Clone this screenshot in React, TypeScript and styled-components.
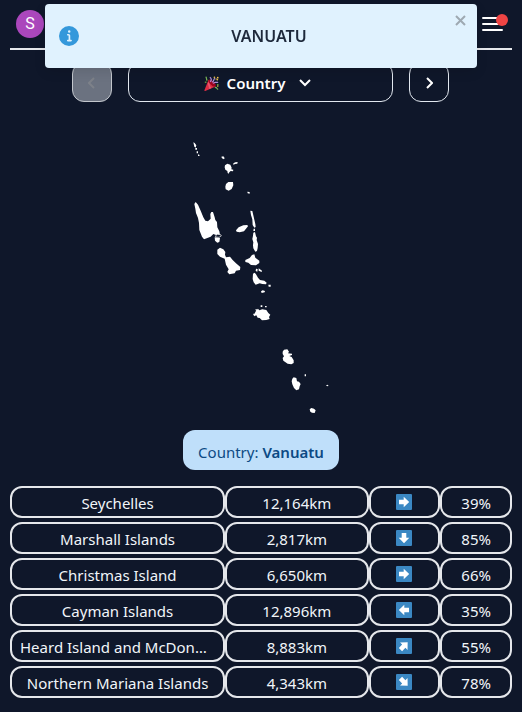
import React from "react";
import styled, { createGlobalStyle } from "styled-components";

const GlobalStyle = createGlobalStyle`
  *, *::before, *::after { box-sizing: border-box; }
  body {
    margin: 0;
    background: #0f172a;
    color: #f1f5f9;
    font-family: "Noto Sans", "Open Sans", sans-serif;
    font-size: 15px;
    line-height: 24px;
  }
  button { font: inherit; color: inherit; cursor: pointer; }
`;

const Page = styled.div`
  display: flex;
  flex-direction: column;
  padding: 0 10px 12px;
`;

const Header = styled.header`
  display: flex;
  align-items: center;
  justify-content: space-between;
  height: 50px;
  padding: 0 6px;
  border-bottom: 2px solid #e5e7eb;
`;

const Avatar = styled.button`
  width: 28px;
  height: 28px;
  padding: 0;
  border: 0;
  border-radius: 50%;
  background: #ab47bc;
  color: #fff;
  font-family: Roboto, sans-serif;
  font-size: 16px;
  line-height: 28px;
`;

const MenuButton = styled.button`
  position: relative;
  display: flex;
  padding: 0 3px;
  border: 0;
  background: none;
  color: #fff;
`;

const Badge = styled.span`
  position: absolute;
  top: -2px;
  right: -2px;
  width: 12px;
  height: 12px;
  border-radius: 50%;
  background: #ef4444;
`;

const Toast = styled.div`
  position: fixed;
  top: 4px;
  left: 45px;
  right: 45px;
  z-index: 10;
  display: flex;
  align-items: center;
  height: 64px;
  padding: 0 14px;
  border-radius: 4px;
  background: #e0f2fe;
  color: #1e293b;
  box-shadow: 0 4px 12px rgba(0, 0, 0, 0.1);
`;

const ToastText = styled.strong`
  flex: 1;
  padding-right: 4px;
  font-size: 16px;
  font-weight: 600;
  text-align: center;
`;

const CloseButton = styled.button`
  position: absolute;
  top: 11px;
  right: 10px;
  display: flex;
  padding: 0;
  border: 0;
  background: none;
  color: #9ea9b2;
`;

const Nav = styled.nav`
  display: flex;
  gap: 16px;
  margin: 12px 63px 0 62px;
`;

const NavButton = styled.button<{ $grow?: boolean }>`
  display: flex;
  flex: ${(p) => (p.$grow ? "1" : "0 0 40px")};
  align-items: center;
  justify-content: center;
  gap: 8px;
  height: 40px;
  padding: 2px 0 0;
  border: 1px solid #e2e8f0;
  border-radius: 12px;
  background: none;
  color: #fff;
  font-weight: 600;

  &:disabled {
    border-color: #c3c7cd;
    background: #6b7280;
    color: #7d8189;
    cursor: default;
  }
`;

const Chevron = styled.svg`
  display: block;
  fill: none;
  stroke: currentColor;
  stroke-width: 2;
`;

const RoundPanel = styled.section`
  display: flex;
  flex-direction: column;
`;

const Silhouette = styled.svg`
  display: block;
  align-self: center;
  margin-top: 36px;
  fill: #fff;
`;

const Answer = styled.p`
  align-self: center;
  margin: 12px 0 16px;
  padding: 10px 15px 6px;
  border-radius: 12px;
  background: #bfdffa;
  color: #0c4a84;

  strong { font-weight: 600; }
`;

const Guesses = styled.table`
  display: block;
`;

const GuessBody = styled.tbody`
  display: grid;
  gap: 4px;
`;

const GuessRow = styled.tr`
  display: grid;
  grid-template-columns: 3fr 2fr 1fr 1fr;
`;

const Cell = styled.td`
  display: block;
  min-width: 0;
  height: 32px;
  padding: 3px 8px 0;
  border: 2px solid #e5e7eb;
  border-radius: 12px;
  overflow: hidden;
  text-align: center;
  text-overflow: ellipsis;
  white-space: nowrap;
`;

const ArrowCell = styled(Cell)`
  display: flex;
  align-items: center;
  justify-content: center;
  padding: 0;
`;

type Guess = { name: string; distance: string; angle: number; direction: string; proximity: string };

const guesses: Guess[] = [
  { name: "Seychelles", distance: "12,164km", angle: 0, direction: "East", proximity: "39%" },
  { name: "Marshall Islands", distance: "2,817km", angle: 90, direction: "South", proximity: "85%" },
  { name: "Christmas Island", distance: "6,650km", angle: 0, direction: "East", proximity: "66%" },
  { name: "Cayman Islands", distance: "12,896km", angle: 180, direction: "West", proximity: "35%" },
  { name: "Heard Island and McDonald Islands", distance: "8,883km", angle: -45, direction: "North-east", proximity: "55%" },
  { name: "Northern Mariana Islands", distance: "4,343km", angle: 45, direction: "South-east", proximity: "78%" },
];

const Arrow = ({ angle, label }: { angle: number; label: string }) => (
  <svg width="16" height="16" viewBox="0 0 16 16" role="img" aria-label={label}>
    <rect width="16" height="16" rx="1" fill="#3b88c3" />
    <path d="M3 5.700h4.700V2.700L13.200 8l-5.500 5.300v-3H3z" fill="#fff" transform={`rotate(${angle} 8 8)`} />
  </svg>
);

const InfoIcon = () => (
  <svg width="20" height="20" viewBox="0 0 24 24" fill="#3498db" aria-hidden="true">
    <path d="M12 0a12 12 0 1 0 12 12A12.013 12.013 0 0 0 12 0zm.25 5a1.5 1.5 0 1 1-1.5 1.5 1.5 1.5 0 0 1 1.5-1.5zm2.25 13.500h-4a1 1 0 0 1 0-2h.75a.25.25 0 0 0 .25-.25v-4.500a.25.25 0 0 0-.25-.25h-.75a1 1 0 0 1 0-2h1a2 2 0 0 1 2 2v4.750a.25.25 0 0 0 .25.25h.75a1 1 0 1 1 0 2z" />
  </svg>
);

const PartyIcon = () => (
  <svg width="15" height="15" viewBox="0 0 36 36" aria-hidden="true">
    <path d="M11 9 1 34c-.5 1.500.5 2.500 2 2l25-11z" fill="#dd2e44" />
    <path d="m12 13 3 12 3 4-5 2-4-13z" fill="#ea596e" />
    <ellipse cx="19.500" cy="17" rx="5" ry="11" fill="#a0041e" transform="rotate(-45 19.500 17)" />
    <path d="M15 14C19 9 18 6 14 3M22 18c4-6 5-1 12-3" fill="none" stroke="#aa8dd8" strokeWidth="3" />
    <path d="M4 2c4 3 0 6 4 9M26 28c5-3 4 4 8 4" fill="none" stroke="#77b255" strokeWidth="3" />
    <path d="M19 15c6-2 3-6 7-10" fill="none" stroke="#aa8dd8" strokeWidth="3" />
    <g fill="#ffcc4d">
      <circle cx="25" cy="3" r="2" />
      <circle cx="33" cy="4" r="2" />
      <circle cx="32" cy="9" r="2" />
      <circle cx="29" cy="7" r="1.500" />
      <circle cx="33" cy="24" r="2" />
    </g>
    <path d="M2 13h4v4H2zM31 19h4v3h-4z" fill="#5c913b" />
  </svg>
);

const Vanuatu = () => (
  <Silhouette width="150" height="280" viewBox="186 138 150 280" role="img" aria-label="Map outline">
    <g transform="translate(185 135) scale(.3333)">
      <path d="m25 22 4 2 5 7-2 7-4-3zM31 39h5v5h-5zM35 49h4v6h-4zM39 58l5 2-1 3h-4zM109 65l6-1 4 5-2 4-6-3zM145 85l6-3 7-1-1 5-8 1-3 4zM120 91l7-5 9 3 4 9-1 5 6 1-1 5-7-1-4 4-2 4-3-2-1-6-6-4-2-7zM123 147l7-6h14l1 10-5 11-9 5-9-4-1-8zM187 170l7 1v5l-6-1z" />
    </g>
    <g transform="translate(190 198) scale(.3333)">
      <path d="M17 12 24 20 32 38 40 58 46 68 54 70 62 62 61 48 64 42 69 42 74 58 76 66 81 72 82 88 88 100 90 110 80 112 70 108 62 116 42 124 36 116 28 96 27 75 24 60 18 45 16 32 13 18z" />
      <path d="M74 118 90 120 88 132 82 134 75 128z" />
      <path d="M77 113 82 109 92 110 94 114 87 118 77 117z" fill="#0f172a" stroke="#fff" strokeWidth="2" />
      <path d="M82 155 90 149 100 154 106 162 105 170 108 178 120 176 128 186 138 196 151 207 150 216 138 218 134 226 118 229 112 222 116 214 108 200 104 182 90 176 82 168z" />
    </g>
    <g transform="translate(185 195) scale(.3333)">
      <path d="m153 106 8-9 14-6 12-1 2 4-6 7-6 8-13 3-9-2zM196 47l6 1 4 17 5 22 1 9-4 2-5-8-1-17-4-13zM206 101h4v7h-5zM205 113l5-2 3 13 3 4-1 7 4 12-1 12-2 9-5 2-6-10-1-9 1-9-3-10 2-10zM181 195l13-6 7-9 7-2 3 10 12 9v7l-10 7-15-1-8-7-9-2zM213 221l5 1-1 8-5-2zM221 220l10 7-1 4-9-4z" />
    </g>
    <g transform="translate(240 250) scale(.3333)">
      <path d="m39 71 5-3 4 5 6 10 6 7 13 2 7 6-2 5-11-1-8-2-12 4-6-7-3-10zM85 104h7v6h-6zM63 124l5-3 7 2-1 4-9 2zM62 166h5v5h-5zM75 168h5v4h-5zM49 181l5-5 4 5 9-3 12 2 6 9 6 5-4 7 2 6-10 3-13 1-7-7-6-1-4-7-7 3 1-7zM46 178l5-1-3 5zM40 191h4v5h-4z" />
    </g>
    <g transform="translate(270 340) scale(.3333)">
      <path d="m38 35 4-6 10-1 5 7-3 5 12 1v4l-8 3 7 3 6 10v8l-7 4-11-2-13-9-2-8 4-5-4-7zM67 116l4-4 8 2 2 10 6 1 5 7-3 7-2 9-8 3-7-7-5-11-2-9zM104 103h4v6h-4zM168 136l4-2 4 3-4 2zM119 208l5-4 8 2 5 5-3 8-8-1-5-3z" />
    </g>
  </Silhouette>
);

export default function App() {
  return (
    <>
      <GlobalStyle />
      <Toast role="alert">
        <InfoIcon />
        <ToastText>VANUATU</ToastText>
        <CloseButton aria-label="Close">
          <svg width="12" height="11" viewBox="0 0 12 11" fill="none" stroke="currentColor" strokeWidth="2">
            <path d="m1 1 9 9M10 1 1 10" />
          </svg>
        </CloseButton>
      </Toast>
      <Page>
        <Header>
          <Avatar aria-label="Account">S</Avatar>
          <MenuButton aria-label="Menu">
            <svg width="22" height="16" viewBox="0 0 22 16" stroke="currentColor" strokeWidth="2" strokeLinecap="round">
              <path d="M2 2h19M2 8h19M2 14h19" />
            </svg>
            <Badge />
          </MenuButton>
        </Header>
        <main>
          <Nav aria-label="Game rounds">
            <NavButton disabled aria-label="Previous">
              <Chevron width="8" height="12" viewBox="0 0 8 12">
                <path d="M6 1 1 6l5 5" />
              </Chevron>
            </NavButton>
            <NavButton $grow>
              <PartyIcon />
              <span>Country</span>
              <Chevron width="24" height="12" viewBox="0 0 24 12">
                <path d="m7 3 5 5 5-5" />
              </Chevron>
            </NavButton>
            <NavButton aria-label="Next">
              <Chevron width="8" height="12" viewBox="0 0 8 12">
                <path d="m2 1 5 5-5 5" />
              </Chevron>
            </NavButton>
          </Nav>
          <RoundPanel>
            <Vanuatu />
            <Answer>
              Country: <strong>Vanuatu</strong>
            </Answer>
          </RoundPanel>
          <Guesses aria-label="Guesses">
            <GuessBody>
              {guesses.map((g) => (
                <GuessRow key={g.name}>
                  <Cell>{g.name}</Cell>
                  <Cell>{g.distance}</Cell>
                  <ArrowCell>
                    <Arrow angle={g.angle} label={g.direction} />
                  </ArrowCell>
                  <Cell>{g.proximity}</Cell>
                </GuessRow>
              ))}
            </GuessBody>
          </Guesses>
        </main>
      </Page>
    </>
  );
}
